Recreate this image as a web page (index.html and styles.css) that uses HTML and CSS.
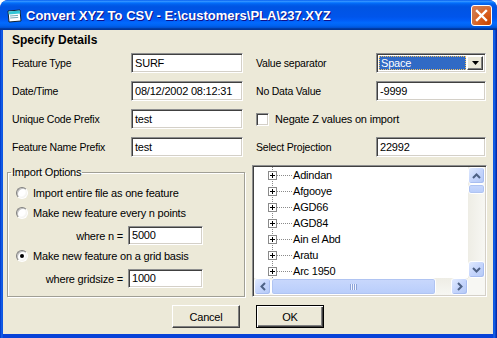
FILE: index.html
```html
<!DOCTYPE html>
<html lang="en">
<head>
    <meta charset="UTF-8">
    <title>Convert XYZ To CSV</title>
    <link rel="stylesheet" href="styles.css">
</head>
<body>
    <div class="window">
        <div class="titlebar">
            <svg class="app-icon" width="16" height="14" viewBox="0 0 16 14">
                <path d="M1 2 L13 1 L14 12 L2 13 Z" fill="#fff" stroke="#123" stroke-width="1"/>
                <path d="M1.5 2.5 L12.8 1.6 L13.1 4.6 L1.8 5.5 Z" fill="#33c6d6"/>
                <path d="M3 7 L11 6.4 M3.2 9 L11.2 8.4" stroke="#7ab" stroke-width="1"/>
            </svg>
            <span class="title">Convert XYZ To CSV - E:\customers\PLA\237.XYZ</span>
            <div class="close-btn">
                <svg width="13" height="13" viewBox="0 0 13 13">
                    <path d="M2 2 L11 11 M11 2 L2 11" stroke="#fff" stroke-width="2.4" stroke-linecap="square"/>
                </svg>
            </div>
        </div>

        <div class="client">
            <div class="heading">Specify Details</div>

            <div class="details">
                <label>Feature Type</label>
                <div class="field">SURF</div>
                <span></span>
                <label>Value separator</label>
                <div class="combo">
                    <div class="combo-value"><span>Space</span></div>
                    <div class="combo-btn">
                        <svg width="7" height="4" viewBox="0 0 7 4"><path d="M0 0 H7 L3.5 4 Z" fill="#000"/></svg>
                    </div>
                </div>

                <label>Date/Time</label>
                <div class="field">08/12/2002 08:12:31</div>
                <span></span>
                <label>No Data Value</label>
                <div class="field">-9999</div>

                <label>Unique Code Prefix</label>
                <div class="field">test</div>
                <span></span>
                <div class="check-row">
                    <span class="checkbox"></span>
                    <span>Negate Z values on import</span>
                </div>

                <label>Feature Name Prefix</label>
                <div class="field">test</div>
                <span></span>
                <label>Select Projection</label>
                <div class="field">22992</div>
            </div>

            <div class="lower">
                <fieldset class="group">
                    <legend>Import Options</legend>
                    <div class="radio-row r1"><span class="radio"></span>Import entire file as one feature</div>
                    <div class="radio-row r2"><span class="radio"></span>Make new feature every n points</div>
                    <div class="param-row p1">
                        <span class="param-label">where n =</span>
                        <div class="field small">5000</div>
                    </div>
                    <div class="radio-row r3"><span class="radio checked"></span>Make new feature on a grid basis</div>
                    <div class="param-row p2">
                        <span class="param-label">where gridsize =</span>
                        <div class="field small">1000</div>
                    </div>
                </fieldset>

                <div class="tree">
                    <ul class="tree-list">
                        <li class="node"><svg class="expander" width="9" height="9" viewBox="0 0 9 9"><rect x="0.5" y="0.5" width="8" height="8" fill="#fff" stroke="#8a8a8a"/><path d="M2 4.5 H7 M4.5 2 V7" stroke="#000"/></svg><span class="branch"></span>Adindan</li>
                        <li class="node"><svg class="expander" width="9" height="9" viewBox="0 0 9 9"><rect x="0.5" y="0.5" width="8" height="8" fill="#fff" stroke="#8a8a8a"/><path d="M2 4.5 H7 M4.5 2 V7" stroke="#000"/></svg><span class="branch"></span>Afgooye</li>
                        <li class="node"><svg class="expander" width="9" height="9" viewBox="0 0 9 9"><rect x="0.5" y="0.5" width="8" height="8" fill="#fff" stroke="#8a8a8a"/><path d="M2 4.5 H7 M4.5 2 V7" stroke="#000"/></svg><span class="branch"></span>AGD66</li>
                        <li class="node"><svg class="expander" width="9" height="9" viewBox="0 0 9 9"><rect x="0.5" y="0.5" width="8" height="8" fill="#fff" stroke="#8a8a8a"/><path d="M2 4.5 H7 M4.5 2 V7" stroke="#000"/></svg><span class="branch"></span>AGD84</li>
                        <li class="node"><svg class="expander" width="9" height="9" viewBox="0 0 9 9"><rect x="0.5" y="0.5" width="8" height="8" fill="#fff" stroke="#8a8a8a"/><path d="M2 4.5 H7 M4.5 2 V7" stroke="#000"/></svg><span class="branch"></span>Ain el Abd</li>
                        <li class="node"><svg class="expander" width="9" height="9" viewBox="0 0 9 9"><rect x="0.5" y="0.5" width="8" height="8" fill="#fff" stroke="#8a8a8a"/><path d="M2 4.5 H7 M4.5 2 V7" stroke="#000"/></svg><span class="branch"></span>Aratu</li>
                        <li class="node"><svg class="expander" width="9" height="9" viewBox="0 0 9 9"><rect x="0.5" y="0.5" width="8" height="8" fill="#fff" stroke="#8a8a8a"/><path d="M2 4.5 H7 M4.5 2 V7" stroke="#000"/></svg><span class="branch"></span>Arc 1950</li>
                    </ul>
                    <div class="vscroll">
                        <div class="sb-btn">
                            <svg width="9" height="6" viewBox="0 0 9 6"><path d="M1 5 L4.5 1.5 L8 5" fill="none" stroke="#4d6185" stroke-width="2"/></svg>
                        </div>
                        <div class="sb-thumb v"></div>
                        <div class="sb-track"></div>
                        <div class="sb-btn">
                            <svg width="9" height="6" viewBox="0 0 9 6"><path d="M1 1 L4.5 4.5 L8 1" fill="none" stroke="#4d6185" stroke-width="2"/></svg>
                        </div>
                    </div>
                    <div class="hscroll">
                        <div class="sb-btn">
                            <svg width="6" height="9" viewBox="0 0 6 9"><path d="M5 1 L1.5 4.5 L5 8" fill="none" stroke="#4d6185" stroke-width="2"/></svg>
                        </div>
                        <div class="sb-thumb h"><span class="grip"></span></div>
                        <div class="sb-track"></div>
                        <div class="sb-btn">
                            <svg width="6" height="9" viewBox="0 0 6 9"><path d="M1 1 L4.5 4.5 L1 8" fill="none" stroke="#4d6185" stroke-width="2"/></svg>
                        </div>
                    </div>
                    <div class="sb-corner"></div>
                </div>
            </div>

            <div class="actions">
                <button class="btn">Cancel</button>
                <button class="btn default">OK</button>
            </div>
        </div>
    </div>
</body>
</html>
```

FILE: styles.css
```css
body {
    margin: 0;
    background-color: #fff;
    font-family: "Liberation Sans", Arial, sans-serif;
    font-size: 10.5px;
    letter-spacing: -0.2px;
    color: #000;
}

.window {
    width: 497px;
    height: 338px;
    box-sizing: border-box;
    padding: 0 4px 4px 3px;
    background: linear-gradient(to right, #0032c8 0, #166aee 2px, #0842d8 3px, #0842d8 493px, #166aee 494px, #001ea0 497px);
    border-radius: 8px 8px 0 0;
    display: flex;
    flex-direction: column;
    overflow: hidden;
}

.titlebar {
    height: 30px;
    margin: 0 -4px 0 -3px;
    padding: 0 5px 0 7px;
    display: flex;
    align-items: center;
    border-radius: 8px 8px 0 0;
    background: linear-gradient(#0058ee 0%, #3593ff 4%, #288eff 6%, #127dff 8%, #036ffc 10%, #0262ee 14%, #0057e5 20%, #0054e3 24%, #0055eb 56%, #005bf5 66%, #026afe 76%, #0062ef 86%, #0052d6 92%, #0040ab 94%, #003092 100%);
}

.app-icon {
    margin-top: 2px;
}

.title {
    margin-left: 3px;
    color: #fff;
    font-size: 13px;
    font-weight: bold;
    letter-spacing: 0;
    text-shadow: 1px 1px #0f1089;
    flex: 1;
}

.close-btn {
    width: 19px;
    height: 19px;
    border: 1px solid #fff;
    border-radius: 3px;
    background: radial-gradient(circle at 90% 90%, #cc4600 0, #dc6527 55%, #cd7546 70%, #e07a4f 100%);
    background-color: #e0502a;
    display: flex;
    align-items: center;
    justify-content: center;
    margin-top: 1px;
}

.client {
    flex: 1;
    background-color: #ece9d8;
    padding: 3px 0 0 4px;
}

.heading {
    font-weight: bold;
    font-size: 12px;
    letter-spacing: 0;
    height: 14px;
    line-height: 14px;
    padding-left: 5px;
}

.details {
    display: grid;
    grid-template-columns: 119px 112px 13px 120px 110px;
    grid-auto-rows: 20px;
    row-gap: 8px;
    margin-top: 6px;
    padding-left: 5px;
}

.details label {
    display: flex;
    align-items: center;
}

.field {
    background-color: #fff;
    box-sizing: border-box;
    height: 20px;
    border: 1px solid;
    border-color: #8e8f8f #fff #fff #8e8f8f;
    box-shadow: inset 1px 1px #404040, inset -1px -1px #d4d0c8;
    padding: 0 3px;
    line-height: 18px;
    font-size: 11px;
    white-space: nowrap;
    overflow: hidden;
}

.combo {
    display: flex;
    box-sizing: border-box;
    height: 20px;
    background: #fff;
    border: 1px solid;
    border-color: #8e8f8f #fff #fff #8e8f8f;
    box-shadow: inset 1px 1px #404040, inset -1px -1px #d4d0c8;
    padding: 2px;
}

.combo-value {
    flex: 1;
    background-color: #316ac5;
    color: #fff;
    outline: 1px dotted #f0c060;
    outline-offset: -1px;
    margin-right: 1px;
    display: flex;
    align-items: center;
    padding-left: 2px;
    font-size: 11px;
}

.combo-btn {
    width: 16px;
    background-color: #ece9d8;
    box-sizing: border-box;
    border: 1px solid;
    border-color: #fff #404040 #404040 #fff;
    box-shadow: inset -1px -1px #808080;
    display: flex;
    align-items: center;
    justify-content: center;
}

.check-row {
    grid-column: 4 / 6;
    display: flex;
    align-items: center;
    gap: 6px;
    font-size: 11px;
}

.checkbox {
    width: 13px;
    height: 13px;
    box-sizing: border-box;
    background: #fff;
    border: 1px solid;
    border-color: #8e8f8f #fff #fff #8e8f8f;
    box-shadow: inset 1px 1px #404040, inset -1px -1px #d4d0c8;
}

.lower {
    display: flex;
    gap: 7px;
    margin-top: 8px;
    height: 132px;
}

.group {
    margin: 1px 0 0 0;
    width: 238px;
    box-sizing: border-box;
    border: 1px solid #a09f95;
    box-shadow: 1px 1px #fff, inset 1px 1px #fff;
    padding: 0 8px 8px 8px;
}

.group legend {
    padding: 0 1px;
    margin-left: -5px;
    line-height: 13px;
    font-size: 11px;
}

.radio-row {
    display: flex;
    align-items: center;
    gap: 5px;
    height: 16px;
    font-size: 11px;
}

.r1 {
    margin-top: 6px;
}

.r2 {
    margin-top: 4px;
}

.r3 {
    margin-top: 3px;
}

.radio {
    width: 12px;
    height: 12px;
    box-sizing: border-box;
    border-radius: 50%;
    border: 1px solid;
    border-color: #808080 #fff #fff #808080;
    background: radial-gradient(circle at 40% 40%, #fff 0, #fff 45%, #e4e2da 100%);
    box-shadow: inset 1px 1px #c0c0c0;
    display: flex;
    align-items: center;
    justify-content: center;
}

.radio.checked::after {
    content: "";
    width: 4px;
    height: 4px;
    border-radius: 50%;
    background: #000;
}

.param-row {
    display: flex;
    align-items: center;
    gap: 5px;
    height: 19px;
    margin-top: 5px;
    font-size: 11px;
}

.param-label {
    width: 107px;
    text-align: right;
}

.field.small {
    width: 75px;
    height: 19px;
    line-height: 17px;
}

.tree {
    width: 235px;
    height: 132px;
    box-sizing: border-box;
    background: #fff;
    border: 1px solid;
    border-color: #8e8f8f #fff #fff #8e8f8f;
    box-shadow: inset 1px 1px #404040, inset -1px -1px #d4d0c8;
    padding: 1px;
    display: grid;
    grid-template-columns: 1fr 17px;
    grid-template-rows: 1fr 17px;
}

.tree-list {
    list-style: none;
    margin: 0;
    padding: 0;
    overflow: hidden;
    font-size: 11px;
    background: repeating-linear-gradient(to bottom, #8a8a8a 0 1px, transparent 1px 2px) 18px 0 / 1px 100% no-repeat;
}

.node {
    display: flex;
    align-items: center;
    height: 16px;
    padding-left: 14px;
}

.branch {
    width: 15px;
    height: 0;
    border-top: 1px dotted #8a8a8a;
    margin-right: 1px;
}

.vscroll {
    display: flex;
    flex-direction: column;
    background: linear-gradient(to right, #eeede5, #f7f7f3);
}

.hscroll {
    display: flex;
    background: linear-gradient(#eeede5, #f7f7f3);
}

.sb-btn {
    width: 17px;
    height: 17px;
    box-sizing: border-box;
    border: 1px solid #fff;
    border-radius: 3px;
    background: linear-gradient(135deg, #e0eafe 0%, #c5d5fc 50%, #b4c9f6 100%);
    box-shadow: inset -1px -1px #a8bdf0;
    display: flex;
    align-items: center;
    justify-content: center;
    flex: none;
}

.sb-track {
    flex: 1;
}

.sb-thumb {
    box-sizing: border-box;
    border: 1px solid #fff;
    border-radius: 3px;
    background: linear-gradient(#c9d8fc, #b8cdfb);
    box-shadow: inset 0 0 0 1px #b0c4f2;
    flex: none;
}

.sb-thumb.v {
    height: 10px;
}

.sb-thumb.h {
    width: 165px;
    display: flex;
    align-items: center;
    justify-content: center;
}

.grip {
    width: 7px;
    height: 6px;
    background: repeating-linear-gradient(to right, #8ca3d9 0 1px, #eef3ff 1px 2px);
}

.sb-corner {
    background: #f7f7f3;
}

.actions {
    display: flex;
    justify-content: center;
    gap: 16px;
    margin-top: 8px;
    padding-right: 4px;
}

.btn {
    width: 68px;
    height: 23px;
    font-family: "Liberation Sans", Arial, sans-serif;
    font-size: 11px;
    letter-spacing: -0.2px;
    background-color: #ece9d8;
    border: 1px solid;
    border-color: #fff #404040 #404040 #fff;
    box-shadow: inset -1px -1px #808080;
    padding: 0;
    color: #000;
}

.btn.default {
    border: 1px solid #000;
    box-shadow: inset 1px 1px #fff, inset -1px -1px #404040, inset -2px -2px #808080;
}
```
